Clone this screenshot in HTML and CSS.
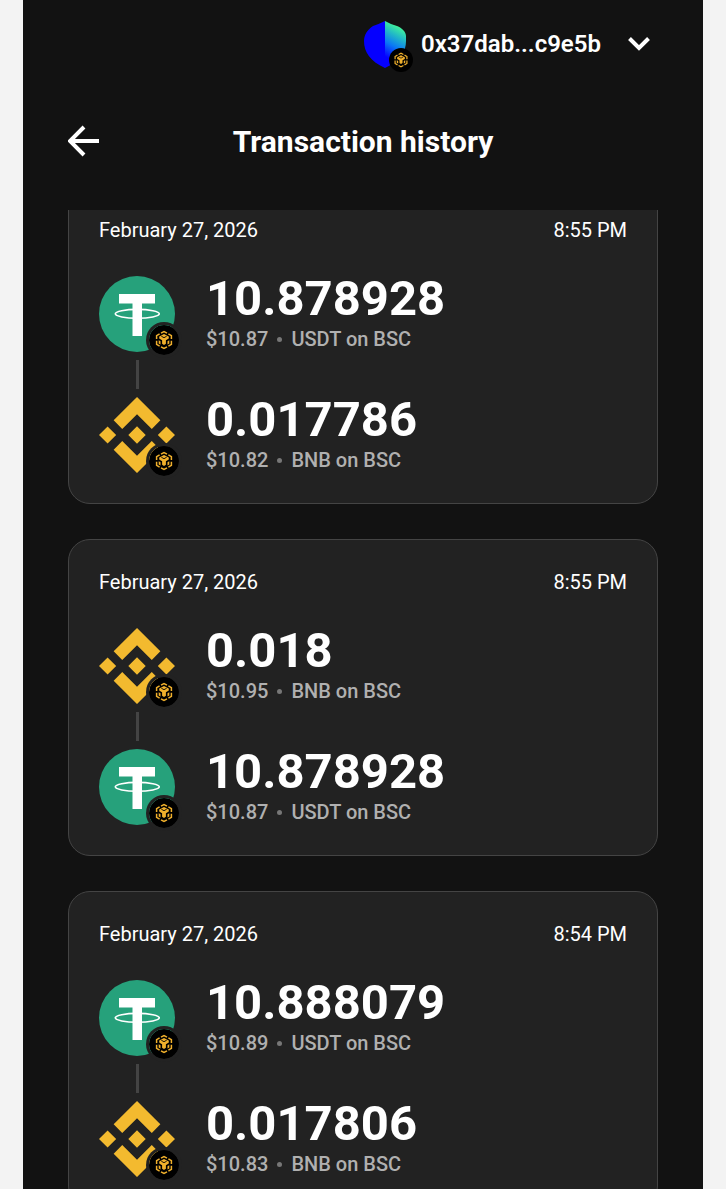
FILE: index.html
```html
<!DOCTYPE html>
<html lang="en">
<head>
    <meta charset="UTF-8">
    <meta name="viewport" content="width=device-width, initial-scale=1.0">
    <title>Transaction history</title>
    <link rel="stylesheet" href="styles.css">
</head>
<body>
    <!-- shared icons -->
    <svg class="sprite" aria-hidden="true">
        <symbol id="usdt" viewBox="0 0 76 76">
            <circle cx="38" cy="38" r="38" fill="#26a17b"/>
            <path d="M20 18H56v9.500H43v32.500H33.500V27.500H20z" fill="#fff"/>
            <ellipse cx="38.300" cy="37.800" rx="22" ry="4.400" fill="none" stroke="#fff" stroke-width="1.600"/>
        </symbol>
        <symbol id="bnb" viewBox="0 0 126.610 126.610">
            <path fill="#f3ba2f" d="M38.730 53.200l24.590-24.580 24.600 24.600 14.300-14.310L63.320 0 24.420 38.900zM0 63.310L14.300 49l14.310 14.310-14.310 14.300zM38.730 73.410L63.320 98l24.600-24.600 14.310 14.290-38.900 38.910-38.910-38.880zM98 63.310L112.300 49l14.310 14.300-14.310 14.320zM77.830 63.300L63.320 48.780 48.810 63.300 63.320 77.800z"/>
        </symbol>
        <symbol id="bsc" viewBox="0 0 30 30">
            <circle cx="15" cy="15" r="15" fill="#000"/>
            <g fill="none" stroke="#f0b02c" stroke-width="1.500">
                <path d="M12 8.200l3-1.700 3 1.700M19.400 8.900l3 1.800v3.300M22.400 15.700v3.600l-3 1.800M18 21.800l-3 1.700-3-1.700M10.600 21.100l-3-1.800v-3.600M7.600 14v-3.300l3-1.800"/>
            </g>
            <path fill="#f0b02c" d="M10.200 11.600L15 9l4.800 2.600v2L16.900 15.300v3.500L15 20l-1.900-1.200v-3.500l-2.900-1.700zM9.700 15.300l1.800 1v3.200l-1.800-1zM20.300 15.300l-1.800 1v3.200l1.800-1z"/>
            <path fill="none" stroke="#000" stroke-width=".9" d="M12.300 11.200L15 12.700l2.700-1.500"/>
        </symbol>
    </svg>

    <div class="app">
        <header>
            <button class="account">
                <span class="avatar">
                    <svg class="shield" viewBox="0 0 42 47">
                        <defs>
                            <linearGradient id="shade" x1="0.600" y1="0" x2="0.350" y2="1">
                                <stop offset="0.050" stop-color="#48ff91"/>
                                <stop offset="0.300" stop-color="#23bcc4"/>
                                <stop offset="0.550" stop-color="#0a78f5"/>
                                <stop offset="0.850" stop-color="#0500ff"/>
                            </linearGradient>
                        </defs>
                        <path fill="#0500ff" d="M21 0v47C6 40 0 31 0 20c0-6 3-11 9-15q6-2 12-5z"/>
                        <path fill="url(#shade)" d="M21 0v47c15-7 21-16 21-27v-5c0-4-4-8-9-10q-7-2-12-5z"/>
                    </svg>
                    <svg class="badge"><use href="#bsc"/></svg>
                </span>
                <span class="address">0x37dab...c9e5b</span>
                <svg class="chevron" viewBox="0 0 22 14"><path d="M1.500 1.500l9.500 9.500 9.500-9.500"/></svg>
            </button>
            <div class="title-bar">
                <button class="back" aria-label="Back">
                    <svg viewBox="0 0 32 32"><path d="M31 16H2M16 2L2 16l14 14"/></svg>
                </button>
                <h1>Transaction history</h1>
            </div>
        </header>

        <main class="history">
            <article class="card">
                <div class="when"><span>February 27, 2026</span><span>8:55 PM</span></div>
                <div class="token">
                    <span class="icon"><svg><use href="#usdt"/></svg><svg class="badge"><use href="#bsc"/></svg></span>
                    <div>
                        <p class="amount">10.878928</p>
                        <p class="info">$10.87<i></i>USDT on BSC</p>
                    </div>
                </div>
                <div class="line"></div>
                <div class="token">
                    <span class="icon"><svg><use href="#bnb"/></svg><svg class="badge"><use href="#bsc"/></svg></span>
                    <div>
                        <p class="amount">0.017786</p>
                        <p class="info">$10.82<i></i>BNB on BSC</p>
                    </div>
                </div>
            </article>

            <article class="card">
                <div class="when"><span>February 27, 2026</span><span>8:55 PM</span></div>
                <div class="token">
                    <span class="icon"><svg><use href="#bnb"/></svg><svg class="badge"><use href="#bsc"/></svg></span>
                    <div>
                        <p class="amount">0.018</p>
                        <p class="info">$10.95<i></i>BNB on BSC</p>
                    </div>
                </div>
                <div class="line"></div>
                <div class="token">
                    <span class="icon"><svg><use href="#usdt"/></svg><svg class="badge"><use href="#bsc"/></svg></span>
                    <div>
                        <p class="amount">10.878928</p>
                        <p class="info">$10.87<i></i>USDT on BSC</p>
                    </div>
                </div>
            </article>

            <article class="card">
                <div class="when"><span>February 27, 2026</span><span>8:54 PM</span></div>
                <div class="token">
                    <span class="icon"><svg><use href="#usdt"/></svg><svg class="badge"><use href="#bsc"/></svg></span>
                    <div>
                        <p class="amount">10.888079</p>
                        <p class="info">$10.89<i></i>USDT on BSC</p>
                    </div>
                </div>
                <div class="line"></div>
                <div class="token">
                    <span class="icon"><svg><use href="#bnb"/></svg><svg class="badge"><use href="#bsc"/></svg></span>
                    <div>
                        <p class="amount">0.017806</p>
                        <p class="info">$10.83<i></i>BNB on BSC</p>
                    </div>
                </div>
            </article>
        </main>
    </div>
</body>
</html>
```
FILE: styles.css
```css
* {
    margin: 0;
    padding: 0;
    box-sizing: border-box;
}

body {
    display: flex;
    height: 100vh;
    padding-bottom: 11px;
    background: #fff;
    color: #fff;
    font-family: Roboto, sans-serif;
}

svg {
    display: block;
}

button {
    border: none;
    background: none;
    color: inherit;
    font: inherit;
    cursor: pointer;
}

.sprite {
    position: absolute;
    width: 0;
    height: 0;
}

.app {
    flex: 1;
    display: flex;
    flex-direction: column;
    min-width: 0;
    border: solid #f3f3f3;
    border-width: 0 23px;
    background: #121212;
}

header {
    height: 210px;
    padding: 20px 45px 0;
    flex-shrink: 0;
}

/* account picker */
.account {
    display: flex;
    align-items: center;
    height: 48px;
    margin-left: auto;
    padding-right: 8px;
}

.avatar {
    position: relative;
    margin-right: 15px;
}

.shield {
    width: 42px;
    height: 47px;
}

.avatar .badge {
    position: absolute;
    right: -7px;
    bottom: -4px;
    width: 24px;
    height: 24px;
}

.address {
    font-size: 24px;
    font-weight: 600;
}

.chevron {
    width: 22px;
    height: 14px;
    margin-left: 27px;
}

.chevron path,
.back path {
    fill: none;
    stroke: #fff;
    stroke-width: 4;
}

/* title */
.title-bar {
    display: grid;
    grid-template-columns: 32px 1fr 32px;
    align-items: center;
    height: 48px;
    margin-top: 49px;
}

.back svg {
    width: 32px;
    height: 32px;
}

h1 {
    text-align: center;
    font-size: 30px;
    font-weight: 700;
}

/* list */
.history {
    flex: 1;
    min-height: 0;
    padding: 0 45px;
    overflow: hidden;
}

.card {
    margin-bottom: 35px;
    padding: 30px;
    border: 1px solid #444;
    border-radius: 22px;
    background: #222;
}

/* list is scrolled a little under the header */
.card:first-child {
    margin-top: -23px;
}

.when {
    display: flex;
    justify-content: space-between;
    margin-bottom: 34px;
    font-size: 20px;
    line-height: 24px;
}

.token {
    display: flex;
    align-items: center;
    gap: 31px;
    height: 76px;
}

.icon {
    position: relative;
    flex-shrink: 0;
}

.icon svg {
    width: 76px;
    height: 76px;
}

.icon .badge {
    position: absolute;
    left: 50px;
    top: 49px;
    width: 30px;
    height: 30px;
    border-radius: 50%;
    box-shadow: 0 0 0 3px #222;
}

.line {
    width: 3px;
    height: 29px;
    margin: 8px 37px;
    background: #444;
}

.amount {
    font-size: 49px;
    font-weight: 700;
    line-height: 50px;
}

.info {
    display: flex;
    align-items: center;
    color: #b0b0b0;
    font-size: 20px;
    font-weight: 500;
    line-height: 30px;
}

.info i {
    width: 5px;
    height: 5px;
    margin: 0 9px;
    border-radius: 50%;
    background: #777;
}
```
